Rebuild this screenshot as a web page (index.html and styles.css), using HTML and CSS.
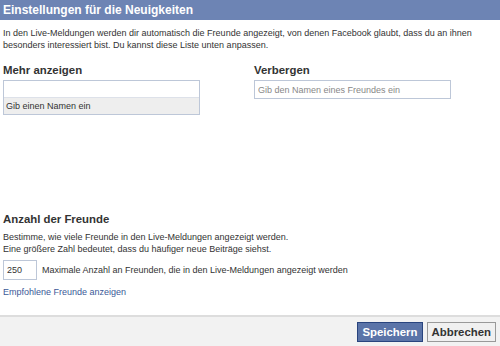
FILE: index.html
```html
<!DOCTYPE html>
<html lang="de">
<head>
  <meta charset="UTF-8" />
  <title>Einstellungen für die Neuigkeiten</title>
  <link rel="stylesheet" href="styles.css">
</head>
<body>

  <div class="dialog">

    <!-- Title bar -->
    <h2 class="dialog-title">Einstellungen für die Neuigkeiten</h2>

    <div class="dialog-body">
      <p class="intro">In den Live-Meldungen werden dir automatisch die Freunde angezeigt, von denen Facebook glaubt, dass du an ihnen besonders interessiert bist. Du kannst diese Liste unten anpassen.</p>

      <!-- Show more / hide columns -->
      <div class="columns">
        <div class="column">
          <h3>Mehr anzeigen</h3>
          <div class="token-box">
            <div class="token-input"></div>
            <div class="token-hint">Gib einen Namen ein</div>
          </div>
        </div>
        <div class="column">
          <h3>Verbergen</h3>
          <input class="text-input" type="text" placeholder="Gib den Namen eines Freundes ein">
        </div>
      </div>

      <!-- Number of friends -->
      <div class="friends-count">
        <h3>Anzahl der Freunde</h3>
        <p class="hint">Bestimme, wie viele Freunde in den Live-Meldungen angezeigt werden.<br>Eine größere Zahl bedeutet, dass du häufiger neue Beiträge siehst.</p>
        <div class="count-row">
          <input class="count-input" type="text" value="250">
          <span>Maximale Anzahl an Freunden, die in den Live-Meldungen angezeigt werden</span>
        </div>
        <a class="link" href="#">Empfohlene Freunde anzeigen</a>
      </div>
    </div>

    <!-- Footer buttons -->
    <div class="dialog-footer">
      <button class="btn btn-primary">Speichern</button>
      <button class="btn">Abbrechen</button>
    </div>
  </div>

</body>
</html>
```

FILE: styles.css
```css
/* Page reset, facebook-ish small type */
body {
  margin: 0;
  font-family: 'Liberation Sans', Arial, sans-serif;
  font-size: 9px;
  color: #333;
  background: #fff;
}

/* Whole dialog fills the window */
.dialog {
  display: flex;
  flex-direction: column;
  height: 346px;
}

/* Blue title bar */
.dialog-title {
  margin: 0;
  height: 20px;
  line-height: 20px;
  padding: 0 3px;
  background: #6d84b4;
  color: #fff;
  font-size: 12px;
  font-weight: bold;
}

.dialog-body {
  flex: 1;
  padding: 0 3px;
}

.intro {
  margin: 7px 0 0;
  line-height: 12px;
}

h3 {
  margin: 0;
  font-size: 11.4px;
  font-weight: bold;
  color: #333;
}

/* Two columns: show more / hide */
.columns {
  display: grid;
  grid-template-columns: 197px 197px;
  column-gap: 54px;
  margin-top: 13px;
}

.column h3 {
  margin-bottom: 4px;
}

.token-box {
  border: 1px solid #bdc7d8;
}

.token-input {
  height: 16px;
  background: #fff;
}

.token-hint {
  height: 16px;
  line-height: 16px;
  padding-left: 2px;
  border-top: 1px solid #dde1e9;
  background: #eeeeee;
}

.text-input {
  box-sizing: border-box;
  width: 197px;
  height: 19px;
  margin: 0;
  padding: 0 3px;
  border: 1px solid #bdc7d8;
  font-family: inherit;
  font-size: 9px;
  color: #333;
}

.text-input::placeholder {
  color: #888;
}

/* Friend count section */
.friends-count {
  margin-top: 98px;
}

.friends-count h3 {
  margin-bottom: 6px;
}

.hint {
  margin: 0;
  line-height: 12px;
}

.count-row {
  display: flex;
  align-items: center;
  gap: 5px;
  margin-top: 5px;
}

.count-input {
  box-sizing: border-box;
  width: 34px;
  height: 20px;
  margin: 0;
  padding: 0 3px;
  border: 1px solid #bdc7d8;
  font-family: inherit;
  font-size: 9px;
  color: #333;
}

.link {
  display: block;
  margin-top: 7px;
  color: #3b5998;
  text-decoration: none;
}

/* Grey footer with buttons on the right */
.dialog-footer {
  display: flex;
  justify-content: flex-end;
  gap: 4px;
  height: 31px;
  padding: 5px 4px 0;
  box-sizing: border-box;
  border-top: 2px solid #dddddd;
  background: #f2f2f2;
}

.btn {
  height: 20px;
  padding: 0 4px;
  border: 1px solid #999;
  background: #f0f0f0;
  color: #333;
  font-family: inherit;
  font-size: 11.4px;
  font-weight: bold;
  cursor: pointer;
}

.btn-primary {
  background: #5b74a8;
  border-color: #29447e;
  color: #fff;
}
```
